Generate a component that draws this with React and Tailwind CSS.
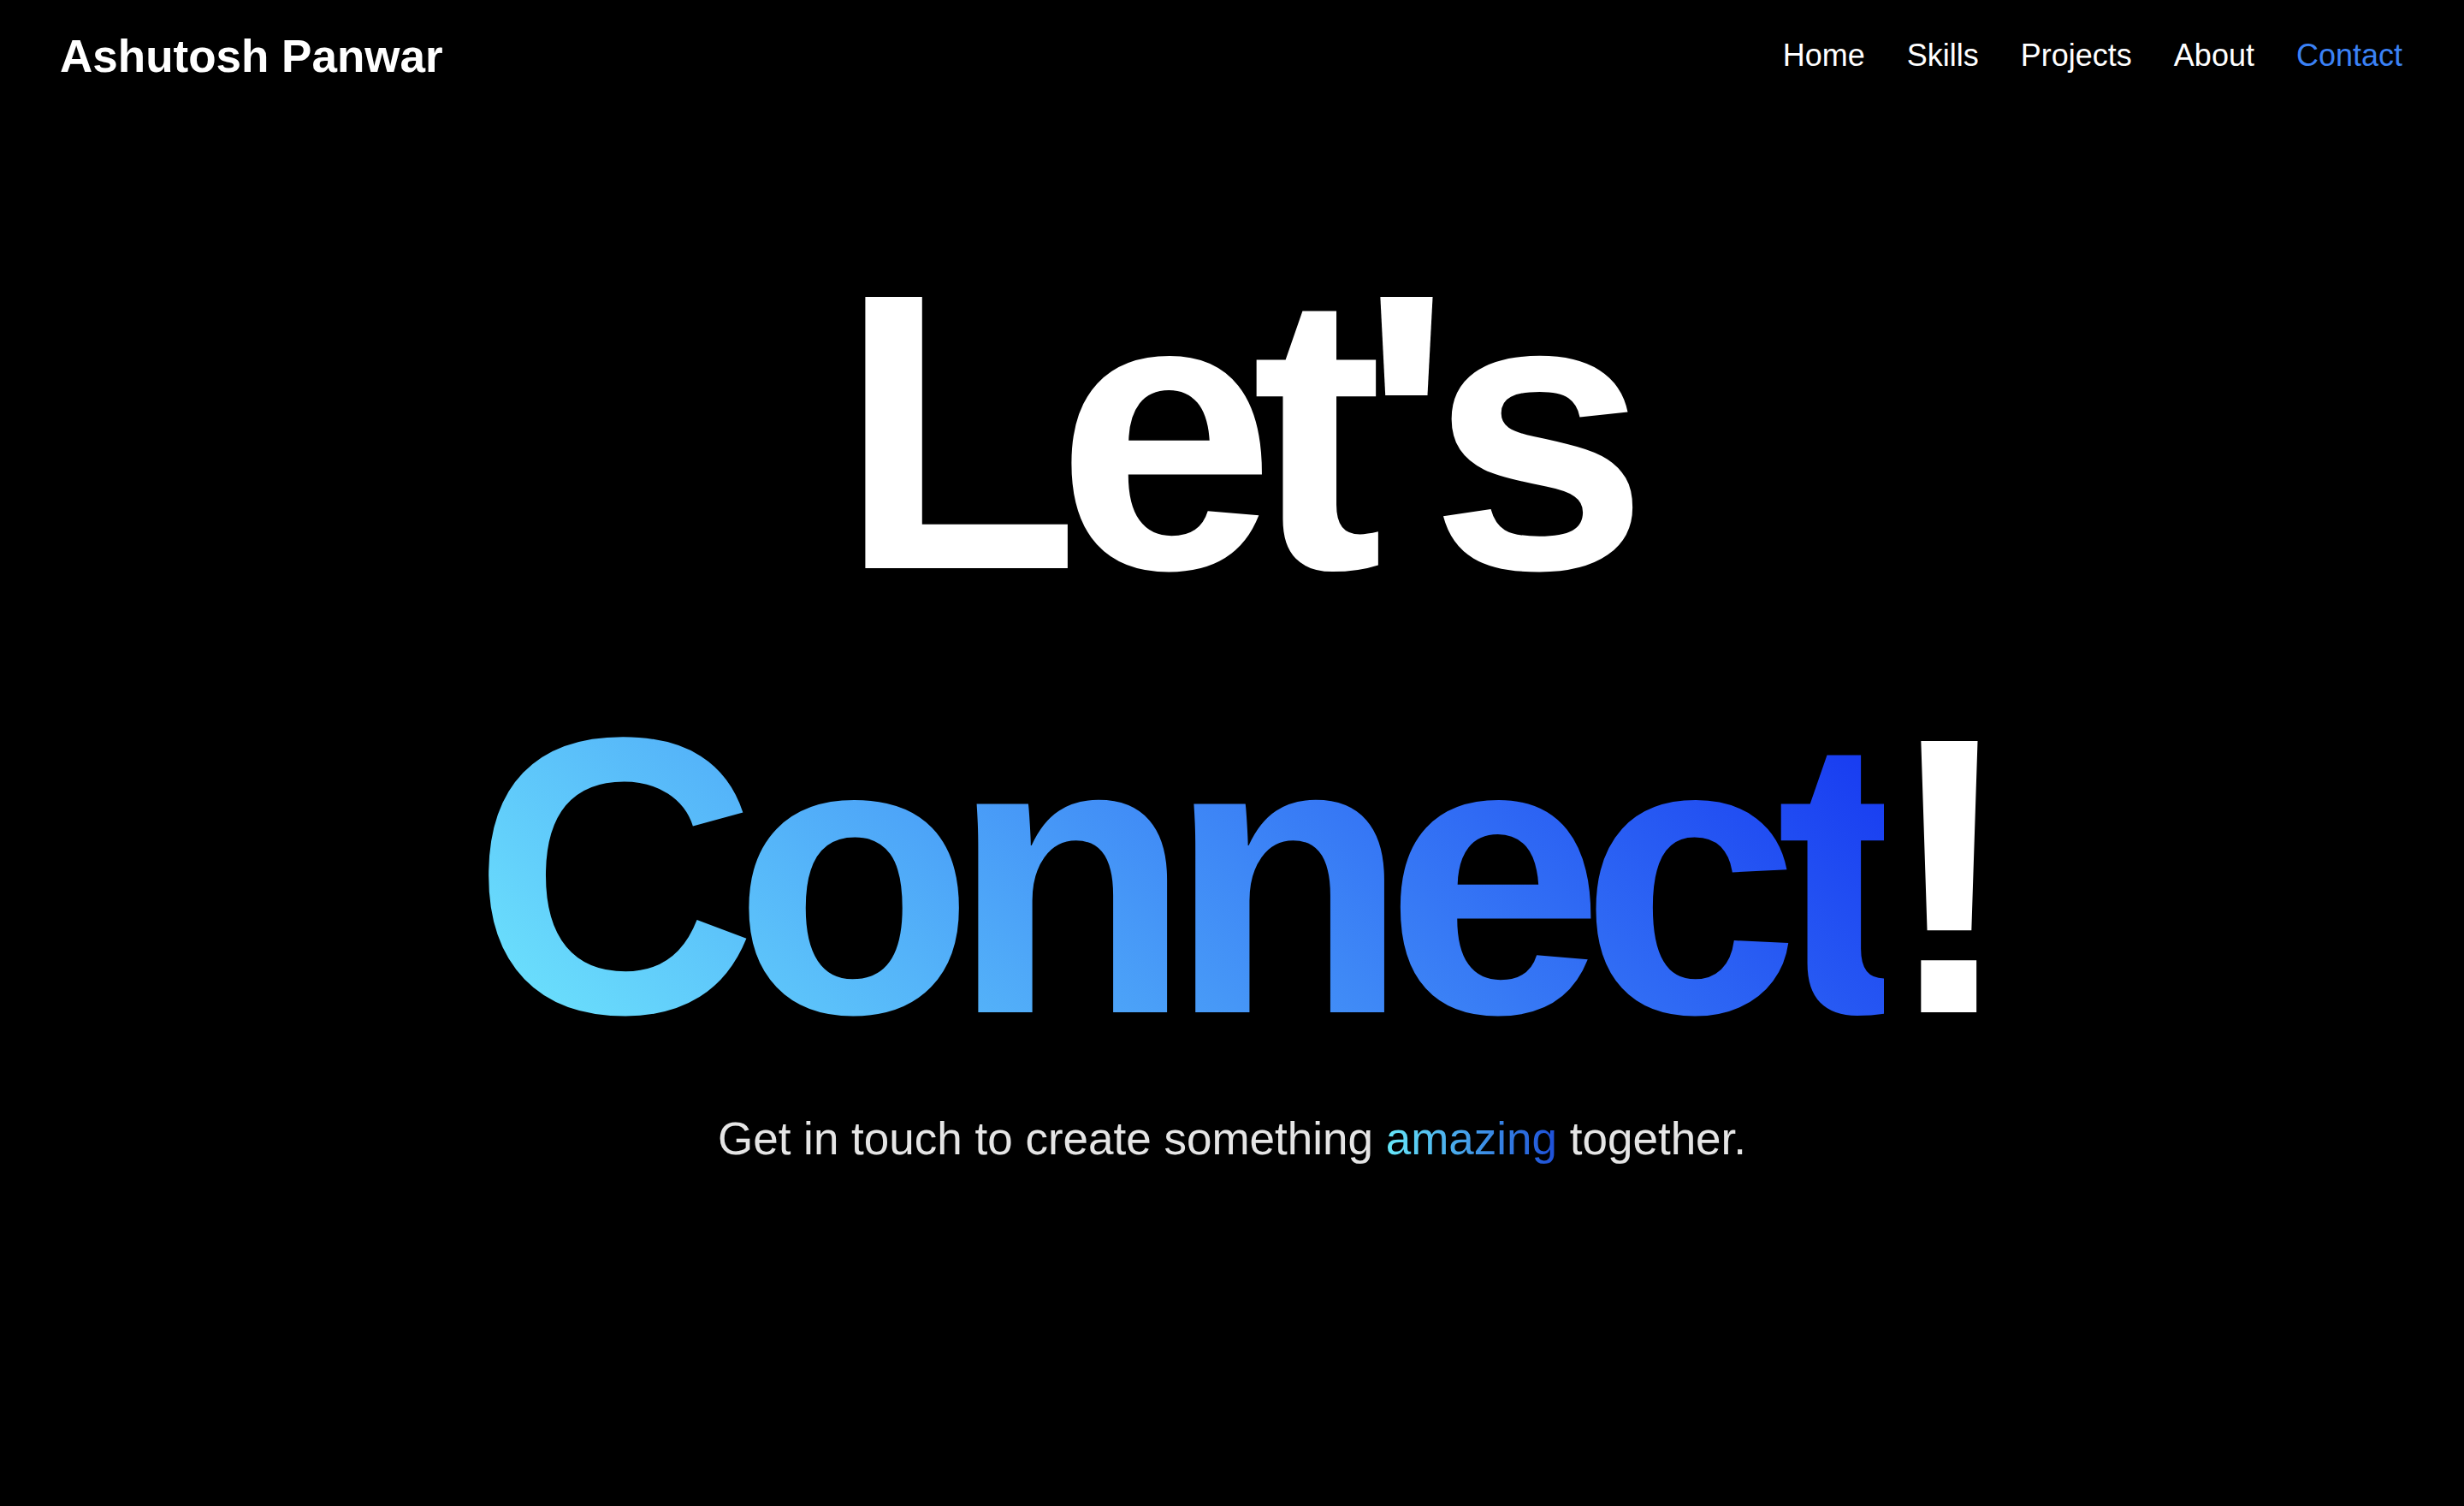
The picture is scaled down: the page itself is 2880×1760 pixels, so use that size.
export default function App() {
  const links = ['Home', 'Skills', 'Projects', 'About', 'Contact'];

  return (
    <div className="min-h-screen bg-black text-white font-['Liberation_Sans',Arial,sans-serif]">
      <nav className="flex h-[130px] items-center justify-between pl-[70px] pr-[72px]">
        <a href="#" className="text-[53px] font-bold leading-none text-white">
          Ashutosh Panwar
        </a>
        <ul className="flex items-center gap-[49px]">
          {links.map((link) => (
            <li key={link}>
              <a
                href="#"
                className={
                  link === 'Contact'
                    ? 'text-[36px] leading-none text-[#3b82f6]'
                    : 'text-[36px] leading-none text-white'
                }
              >
                {link}
              </a>
            </li>
          ))}
        </ul>
      </nav>

      <section className="flex flex-col items-center pt-[145px] text-center">
        <h1 className="text-[460.8px] font-bold leading-none tracking-[-0.06em]">
          <span className="block">Let's</span>
          <span className="mt-[58px] block">
            <span className="bg-[linear-gradient(45deg,#72eefd,#1230f0)] bg-clip-text text-transparent">
              Connect
            </span>
            <span className="text-white">!</span>
          </span>
        </h1>
        <p className="mt-[49px] text-[53px] leading-none text-[#e5e5e5]">
          Get in touch to create something{' '}
          <span className="bg-[linear-gradient(90deg,#67e8f9,#1d4ed8)] bg-clip-text text-transparent">
            amazing
          </span>{' '}
          together.
        </p>
      </section>
    </div>
  );
}
